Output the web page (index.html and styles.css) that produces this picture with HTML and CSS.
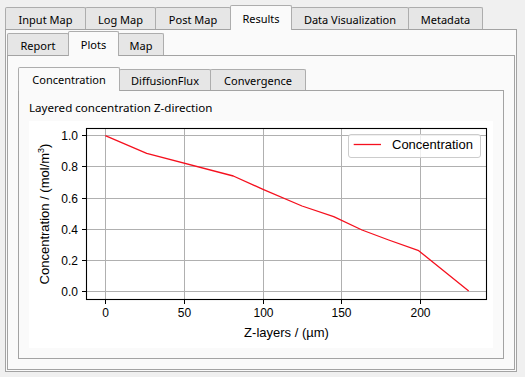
FILE: index.html
```html
<!DOCTYPE html>
<html>
<head>
<meta charset="utf-8">
<title>Results - Plots</title>
<link rel="stylesheet" href="styles.css">
</head>
<body>
<div class="tabwidget outer">
  <div class="tabbar">
    <div class="tab t-input">Input Map</div>
    <div class="tab t-log">Log Map</div>
    <div class="tab t-post">Post Map</div>
    <div class="tab sel t-results">Results</div>
    <div class="tab t-dataviz">Data Visualization</div>
    <div class="tab t-meta">Metadata</div>
  </div>
  <div class="pane pane1">
    <div class="tabwidget inner">
      <div class="tabbar">
        <div class="tab t-report">Report</div>
        <div class="tab sel t-plots">Plots</div>
        <div class="tab t-map">Map</div>
      </div>
      <div class="pane pane2">
        <div class="tabbar tabbar3">
          <div class="tab sel t-conc">Concentration</div>
          <div class="tab t-flux">DiffusionFlux</div>
          <div class="tab t-conv">Convergence</div>
        </div>
        <div class="pane pane3">
          <div class="plot-title">Layered concentration Z-direction</div>
          <svg class="figure" width="464" height="227" viewBox="0 0 464 227" xmlns="http://www.w3.org/2000/svg">
            <rect x="57.5" y="7.5" width="400" height="171" fill="#ffffff"/>
            <g class="grid" stroke="#b0b0b0" stroke-width="1">
              <line x1="76.5" y1="7.5" x2="76.5" y2="178.5"/>
              <line x1="155.5" y1="7.5" x2="155.5" y2="178.5"/>
              <line x1="234.5" y1="7.5" x2="234.5" y2="178.5"/>
              <line x1="312.5" y1="7.5" x2="312.5" y2="178.5"/>
              <line x1="391.5" y1="7.5" x2="391.5" y2="178.5"/>
              <line x1="57.5" y1="14.5" x2="457.5" y2="14.5"/>
              <line x1="57.5" y1="45.5" x2="457.5" y2="45.5"/>
              <line x1="57.5" y1="77.5" x2="457.5" y2="77.5"/>
              <line x1="57.5" y1="108.5" x2="457.5" y2="108.5"/>
              <line x1="57.5" y1="139.5" x2="457.5" y2="139.5"/>
              <line x1="57.5" y1="170.5" x2="457.5" y2="170.5"/>
            </g>
            <polyline fill="none" stroke="#f5101e" stroke-width="1.3" stroke-linejoin="round"
              points="76.3,14.7 117.7,32.3 204.3,55 234,68.3 273,85 304.7,95.7 333,109 359.7,119 389.7,129.7 439.7,170"/>
            <rect x="57.5" y="7.5" width="400" height="171" fill="none" stroke="#000" stroke-width="1.1"/>
            <g class="ticks" stroke="#000" stroke-width="1">
              <line x1="76.5" y1="178.5" x2="76.5" y2="183"/>
              <line x1="155.5" y1="178.5" x2="155.5" y2="183"/>
              <line x1="234.5" y1="178.5" x2="234.5" y2="183"/>
              <line x1="312.5" y1="178.5" x2="312.5" y2="183"/>
              <line x1="391.5" y1="178.5" x2="391.5" y2="183"/>
              <line x1="53" y1="14.5" x2="57.5" y2="14.5"/>
              <line x1="53" y1="45.5" x2="57.5" y2="45.5"/>
              <line x1="53" y1="77.5" x2="57.5" y2="77.5"/>
              <line x1="53" y1="108.5" x2="57.5" y2="108.5"/>
              <line x1="53" y1="139.5" x2="57.5" y2="139.5"/>
              <line x1="53" y1="170.5" x2="57.5" y2="170.5"/>
            </g>
            <g class="ticklabels" font-size="12" fill="#000">
              <text x="49" y="19" text-anchor="end">1.0</text>
              <text x="49" y="50" text-anchor="end">0.8</text>
              <text x="49" y="82" text-anchor="end">0.6</text>
              <text x="49" y="113" text-anchor="end">0.4</text>
              <text x="49" y="144" text-anchor="end">0.2</text>
              <text x="49" y="175" text-anchor="end">0.0</text>
              <text x="76.5" y="196.3" text-anchor="middle">0</text>
              <text x="155.5" y="196.3" text-anchor="middle">50</text>
              <text x="234.5" y="196.3" text-anchor="middle">100</text>
              <text x="312.5" y="196.3" text-anchor="middle">150</text>
              <text x="391.5" y="196.3" text-anchor="middle">200</text>
            </g>
            <text class="axlabel" x="257.5" y="215.7" text-anchor="middle" font-size="13">Z-layers / (µm)</text>
            <text class="axlabel" transform="translate(20.3,93) rotate(-90)" text-anchor="middle" font-size="13">Concentration / (mol/m<tspan font-size="9" dy="-5">3</tspan><tspan dy="5">)</tspan></text>
            <g class="legend">
              <rect x="319.5" y="13.5" width="132" height="23" rx="2.5" fill="#ffffff" fill-opacity="0.8" stroke="#cccccc" stroke-width="1"/>
              <line x1="324.7" y1="23.5" x2="352" y2="23.5" stroke="#f5101e" stroke-width="1.3"/>
              <text x="363" y="28.3" font-size="13" fill="#000">Concentration</text>
            </g>
          </svg>
        </div>
      </div>
    </div>
  </div>
</div>
</body>
</html>
```

FILE: styles.css
```css
html, body {
  margin: 0;
  padding: 0;
}

body {
  width: 525px;
  height: 377px;
  overflow: hidden;
  background: #f0f0f0;
  font-family: "Noto Sans", "Liberation Sans", sans-serif;
  font-size: 11px;
  color: #000;
}

.tabwidget {
  display: flex;
  flex-direction: column;
}

.outer {
  box-sizing: border-box;
  height: 377px;
  padding: 5px 8px 5px 5px;
}

.tabbar {
  display: flex;
  align-items: flex-end;
  height: 24px;
  flex: none;
  position: relative;
  z-index: 1;
}

.tab {
  box-sizing: border-box;
  height: 22px;
  padding: 2px 0 0 0;
  line-height: 19px;
  text-align: center;
  margin-right: -1px;
  border: 1px solid #adadad;
  border-bottom: none;
  border-radius: 2px 2px 0 0;
  background: #e6e6e6;
  white-space: nowrap;
}

.tab.sel {
  height: 25px;
  padding-top: 1px;
  line-height: 23px;
  margin-bottom: -1px;
  background: #fafafa;
  position: relative;
  z-index: 2;
}

.tabbar3 {
  height: 23px;
}

.tabbar3 .tab {
  height: 21px;
  padding-top: 1px;
  line-height: 19px;
}

.tabbar3 .tab.sel {
  height: 24px;
  padding-top: 1px;
  line-height: 22px;
}

/* tab widths as laid out by the native style */
.t-input { width: 81px; }
.t-log { width: 71px; }
.t-post { width: 76px; }
.t-results { width: 62px; }
.t-dataviz { width: 118px; }
.t-meta { width: 75px; }

.t-report { width: 62px; }
.t-plots { width: 51px; }
.t-map { width: 46px; }

.t-conc { width: 102px; }
.t-flux { width: 92px; }
.t-conv { width: 96px; }

.pane {
  box-sizing: border-box;
  border: 1px solid #a3a3a3;
  background: #fafafa;
  display: flex;
  flex-direction: column;
}

.pane1 {
  flex: 1;
  padding: 1px;
}

.inner {
  flex: 1;
}

.pane2 {
  flex: 1;
  padding: 11px 10px 10px 10px;
}

.pane3 {
  flex: 1;
  padding: 0 10px 10px 10px;
}

.plot-title {
  box-sizing: border-box;
  height: 30px;
  padding-top: 9px;
  line-height: 16px;
  font-size: 11.6px;
  white-space: nowrap;
}

.figure {
  display: block;
  background: #ffffff;
  font-family: "Liberation Sans", Arial, sans-serif;
}
```
